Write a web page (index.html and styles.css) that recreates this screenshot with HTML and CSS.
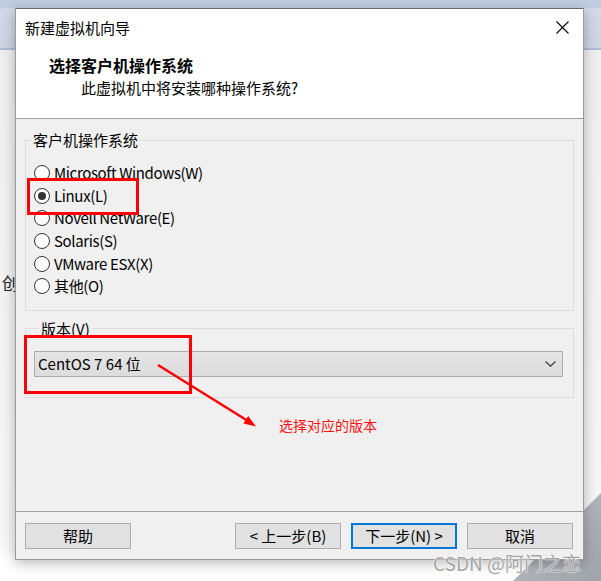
FILE: index.html
```html
<!DOCTYPE html>
<html lang="zh-CN">
<head>
<meta charset="utf-8">
<title>新建虚拟机向导</title>
<link rel="stylesheet" href="styles.css">
</head>
<body>
<div class="desktop">
  <span class="behind-char">创</span>
  <div class="corner"></div>
  <div class="dialog">
    <div class="header">
      <div class="titlebar">
        <span class="title">新建虚拟机向导</span>
        <svg class="close" width="13" height="13" viewBox="0 0 13 13"><path d="M0.5 0.5L12.5 12.5M12.5 0.5L0.5 12.5" stroke="#000" stroke-width="1.1" fill="none"/></svg>
      </div>
      <div class="heading">选择客户机操作系统</div>
      <div class="subheading">此虚拟机中将安装哪种操作系统?</div>
    </div>
    <div class="body">
      <fieldset class="group os">
        <legend>客户机操作系统</legend>
        <div class="radios">
          <label class="radio"><span class="dot"></span>Microsoft Windows(W)</label>
          <label class="radio checked"><span class="dot"></span>Linux(L)</label>
          <label class="radio"><span class="dot"></span>Novell NetWare(E)</label>
          <label class="radio"><span class="dot"></span>Solaris(S)</label>
          <label class="radio"><span class="dot"></span>VMware ESX(X)</label>
          <label class="radio"><span class="dot"></span>其他(O)</label>
        </div>
      </fieldset>
      <fieldset class="group ver">
        <legend>版本(V)</legend>
        <div class="combo">
          <span>CentOS 7 64 位</span>
          <svg width="11" height="6" viewBox="0 0 11 6"><path d="M0.5 0.5L5.5 5.2L10.5 0.5" stroke="#333" stroke-width="1.1" fill="none"/></svg>
        </div>
      </fieldset>
      <div class="note">选择对应的版本</div>
    </div>
    <div class="footer">
      <button class="btn help">帮助</button>
      <button class="btn">&lt; 上一步(B)</button>
      <button class="btn primary">下一步(N) &gt;</button>
      <button class="btn">取消</button>
    </div>
  </div>
  <div class="mark mark-linux"></div>
  <div class="mark mark-version"></div>
  <svg class="arrow" width="601" height="581" viewBox="0 0 601 581">
    <line x1="158" y1="365" x2="248" y2="421" stroke="#ff0000" stroke-width="2.5"/>
    <polygon points="256,426.5 243.4,423.5 248.2,415.9" fill="#ff0000"/>
  </svg>
  <div class="watermark">CSDN @阿门之恋</div>
</div>
</body>
</html>
```
FILE: styles.css
```css
* { box-sizing: border-box; }
html, body { margin: 0; padding: 0; background: #fff; }
body {
  font-family: "Noto Sans CJK SC", "Liberation Sans", sans-serif;
  font-size: 15px;
  color: #000;
}
.desktop {
  position: relative;
  width: 601px;
  height: 581px;
  overflow: hidden;
  padding: 8px 0 0 15px;
  background:
    linear-gradient(to bottom, #c2cce0 0, #c2cce0 8px, #d3d9e7 8px, #ccd3e3 48px, #aebbd5 48px, #aebbd5 50px, #efefef 50px, #f6f6f6 540px, #ffffff 560px, #ffffff 100%);
}
.behind-char {
  position: absolute;
  left: 2px;
  top: 272px;
  font-size: 17px;
  line-height: 22px;
  color: #222;
}
.corner {
  position: absolute;
  left: 500px;
  top: 480px;
  width: 101px;
  height: 101px;
  background: linear-gradient(135deg, #c4c7cc 0%, #9fa3aa 100%);
  clip-path: polygon(13px 101px, 101px 101px, 101px 13px);
}
.dialog {
  position: relative;
  z-index: 1;
  width: 569px;
  height: 552px;
  display: flex;
  flex-direction: column;
  background: #f0f0f0;
  border: 1px solid #9a9a9a;
  border-top-color: #6a6a6a;
  box-shadow: 0 3px 12px rgba(0,0,0,0.28);
}
.header {
  height: 110px;
  background: #fff;
  border-bottom: 1px solid #a0a0a0;
  padding: 9px 14px 0 9px;
}
.titlebar {
  display: flex;
  justify-content: space-between;
  align-items: center;
  height: 20px;
}
.title { line-height: 20px; }
.close { margin-top: -2px; }
.heading {
  margin-top: 17px;
  padding-left: 24px;
  font-weight: bold;
  font-size: 16px;
  line-height: 20px;
}
.subheading {
  margin-top: 3px;
  padding-left: 56px;
  line-height: 20px;
}
.body {
  flex: 1;
  padding: 11px 9px 0 9px;
}
.group {
  margin: 0;
  padding: 0;
  min-width: 0;
  border: 1px solid #dcdcdc;
}
.group legend {
  margin-left: 5px;
  padding: 0 2px;
  line-height: 20px;
  color: #000;
}
.radios {
  padding: 12px 0 12px 8px;
}
.radio {
  display: flex;
  align-items: center;
  height: 22.6px;
  line-height: 22px;
  gap: 4px;
  letter-spacing: -0.35px;
}
.dot {
  width: 16px;
  height: 16px;
  border: 1.3px solid #333;
  border-radius: 50%;
  background: #fff;
  display: inline-flex;
  align-items: center;
  justify-content: center;
  flex: none;
}
.radio.checked .dot::after {
  content: "";
  width: 8px;
  height: 8px;
  border-radius: 50%;
  background: #333;
}
.ver {
  margin-top: 8px;
  padding: 12px 10px 20px 8px;
}
.combo {
  height: 26px;
  border: 1px solid #adadad;
  background: linear-gradient(to bottom, #e5e5e5, #dcdcdc);
  display: flex;
  align-items: center;
  justify-content: space-between;
  padding: 0 6px 0 3px;
  line-height: 20px;
}
.note {
  margin-top: 17px;
  padding-left: 254px;
  color: #ff1010;
  font-size: 14px;
  line-height: 20px;
}
.footer {
  border-top: 1px solid #a0a0a0;
  padding: 11px 10px 10px 9px;
  display: flex;
  gap: 10px;
}
.btn {
  width: 106px;
  height: 26px;
  padding: 0;
  font-family: inherit;
  font-size: 15px;
  line-height: 20px;
  color: #000;
  background: #e1e1e1;
  border: 1px solid #adadad;
  border-radius: 0;
}
.help { margin-right: auto; }
.primary {
  border: 2px solid #0078d7;
}
.mark {
  position: absolute;
  z-index: 2;
  border: 3px solid #ff0000;
}
.mark-linux { left: 27px; top: 178px; width: 112px; height: 37px; }
.mark-version { left: 24px; top: 335px; width: 168px; height: 59px; }
.arrow {
  position: absolute;
  left: 0;
  top: 0;
  z-index: 2;
  pointer-events: none;
}
.watermark {
  position: absolute;
  z-index: 3;
  left: 433px;
  top: 549px;
  font-size: 19px;
  line-height: 28px;
  color: #a4a4a4;
  text-shadow: 0 0 1px #fff, 0 0 2px #fff;
  white-space: nowrap;
}
```
